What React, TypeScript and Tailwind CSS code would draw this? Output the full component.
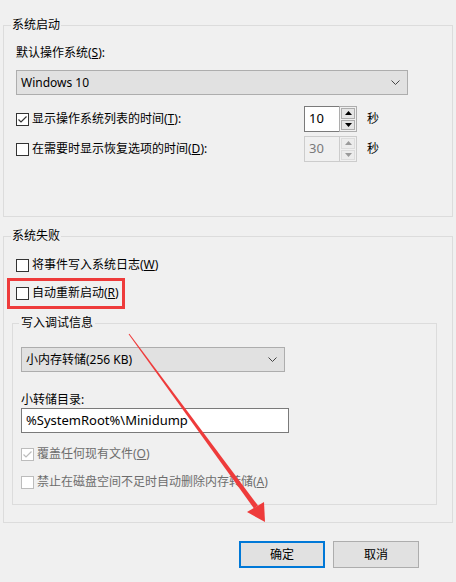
import type { ReactNode } from "react";

const FONT = '"Noto Sans", "Noto Sans CJK SC", sans-serif';

function Check({ checked = false, disabled = false }: { checked?: boolean; disabled?: boolean }) {
  return (
    <span
      className={`inline-flex w-[13px] h-[13px] shrink-0 border bg-white ${
        disabled ? "border-[#bcbcbc]" : "border-[#333333]"
      }`}
    >
      {checked && (
        <svg width="11" height="11" viewBox="0 0 11 11">
          <polyline
            points="1.5,5.5 4,8 9.5,2.5"
            fill="none"
            stroke={disabled ? "#bcbcbc" : "#333333"}
            strokeWidth="1.2"
          />
        </svg>
      )}
    </span>
  );
}

function CheckRow({
  checked,
  disabled,
  children,
}: {
  checked?: boolean;
  disabled?: boolean;
  children: ReactNode;
}) {
  return (
    <div className={`flex items-center gap-[3px] h-4 ${disabled ? "text-[#6d6d6d]" : "text-black"}`}>
      <Check checked={checked} disabled={disabled} />
      <span className="leading-4 whitespace-nowrap">{children}</span>
    </div>
  );
}

function Chevron() {
  return (
    <svg width="9" height="5" viewBox="0 0 9 5">
      <polyline points="0.5,0.5 4.5,4.5 8.5,0.5" fill="none" stroke="#444" strokeWidth="1" />
    </svg>
  );
}

function Select({ value, width }: { value: string; width: string }) {
  return (
    <div
      className={`${width} h-[25px] flex items-center justify-between pl-[4px] pr-[7px] bg-[#e1e1e1] border border-[#adadad]`}
    >
      <span>{value}</span>
      <Chevron />
    </div>
  );
}

function Tri({ up, color }: { up: boolean; color: string }) {
  return (
    <svg width="7" height="4" viewBox="0 0 7 4">
      <polygon points={up ? "3.5,0 7,4 0,4" : "0,0 7,0 3.5,4"} fill={color} />
    </svg>
  );
}

function Spin({ value, disabled = false }: { value: string; disabled?: boolean }) {
  const tri = disabled ? "#9a9a9a" : "#000";
  const btn = disabled
    ? "border-[#dcdcdc] bg-[#ececec]"
    : "border-[#adadad] bg-[#e5e5e5]";
  return (
    <div className="flex h-[26px] w-[53px]">
      <div
        className={`flex-1 flex items-center pl-[4px] border ${
          disabled ? "border-[#cccccc] bg-[#f0f0f0] text-[#7a7a7a]" : "border-[#7a7a7a] bg-white text-black"
        } border-r-0 text-[13px]`}
      >
        {value}
      </div>
      <div
        className={`w-[18px] flex flex-col gap-[1px] p-[1px] border ${
          disabled ? "border-[#cccccc]" : "border-[#adadad]"
        } bg-[#f0f0f0]`}
      >
        <div className={`flex-1 flex items-center justify-center border ${btn}`}>
          <Tri up color={tri} />
        </div>
        <div className={`flex-1 flex items-center justify-center border ${btn}`}>
          <Tri up={false} color={tri} />
        </div>
      </div>
    </div>
  );
}

export default function App() {
  return (
    <div
      className="relative w-[456px] h-[582px] bg-[#f0f0f0] text-[12px] text-black overflow-hidden"
      style={{ fontFamily: FONT }}
    >
      <div className="px-[3px] pt-[17px]">
        {/* 系统启动 */}
        <fieldset className="border border-[#dcdcdc] p-0 m-0">
          <legend className="ml-[7px] px-[1px] leading-4">系统启动</legend>
          <div className="pl-[12px] pr-[44px] pt-[12px] pb-[54px]">
            <div className="leading-4">
              默认操作系统(<u>S</u>):
            </div>
            <div className="mt-[9px]">
              <Select value="Windows 10" width="w-[392px]" />
            </div>
            <div className="mt-[11px] flex items-center">
              <div className="w-[288px]">
                <CheckRow checked>
                  显示操作系统列表的时间(<u>T</u>):
                </CheckRow>
              </div>
              <Spin value="10" />
              <span className="ml-[10px] leading-4">秒</span>
            </div>
            <div className="mt-[4px] flex items-center">
              <div className="w-[288px]">
                <CheckRow>
                  在需要时显示恢复选项的时间(<u>D</u>):
                </CheckRow>
              </div>
              <Spin value="30" disabled />
              <span className="ml-[10px] leading-4">秒</span>
            </div>
          </div>
        </fieldset>

        {/* 系统失败 */}
        <fieldset className="mt-[11px] border border-[#dcdcdc] p-0 m-0">
          <legend className="ml-[7px] px-[1px] leading-4">系统失败</legend>
          <div className="pl-[8px] pr-[15px] pt-[13px] pb-[17px]">
            <div className="pl-[4px]">
              <CheckRow>
                将事件写入系统日志(<u>W</u>)
              </CheckRow>
            </div>
            <div className="pl-[4px] mt-[12px]">
              <CheckRow>
                自动重新启动(<u>R</u>)
              </CheckRow>
            </div>

            <fieldset className="mt-[14px] border border-[#dcdcdc] p-0 m-0">
              <legend className="ml-[6px] px-[2px] leading-4">写入调试信息</legend>
              <div className="pl-[8px] pt-[16px] pb-[14px]">
                <Select value="小内存转储(256 KB)" width="w-[264px]" />
                <div className="mt-[20px] leading-4">小转储目录:</div>
                <div className="w-[268px] h-[25px] flex items-center pl-[4px] bg-white border border-[#7a7a7a] text-[13px]">
                  %SystemRoot%\Minidump
                </div>
                <div className="mt-[13px]">
                  <CheckRow checked disabled>
                    覆盖任何现有文件(<u>O</u>)
                  </CheckRow>
                </div>
                <div className="mt-[12px]">
                  <CheckRow disabled>
                    禁止在磁盘空间不足时自动删除内存转储(<u>A</u>)
                  </CheckRow>
                </div>
              </div>
            </fieldset>
          </div>
        </fieldset>

        <div className="mt-[18px] flex justify-end gap-[8px] pr-[34px]">
          <button className="w-[86px] h-[27px] bg-[#e1e1e1] border-2 border-[#0078d7]">确定</button>
          <button className="w-[86px] h-[27px] bg-[#e1e1e1] border border-[#adadad]">取消</button>
        </div>
      </div>

      {/* annotation: red box */}
      <div className="absolute left-[7px] top-[278px] w-[118px] h-[31px] border-[3px] border-[#ee3b3b] pointer-events-none" />

      {/* annotation: red arrow */}
      <svg
        className="absolute inset-0 pointer-events-none"
        width="456"
        height="582"
        viewBox="0 0 456 582"
      >
        <polygon
          points="128.6,334.3 129.4,333.7 258,505.6 254,508.4"
          fill="#ee3b3b"
        />
        <polygon points="247,512 264,502 265,522" fill="#ee3b3b" />
      </svg>
    </div>
  );
}
